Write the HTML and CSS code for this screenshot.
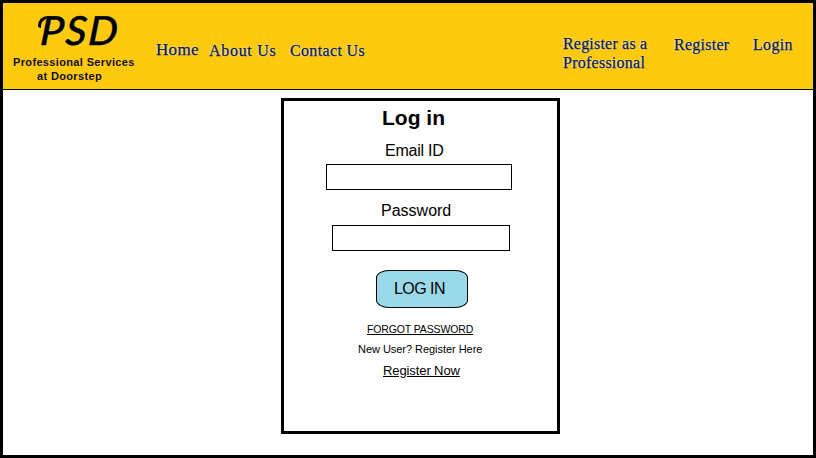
FILE: index.html
```html
<!DOCTYPE html>
<html lang="en">
<head>
<meta charset="utf-8">
<title>PSD - Log in</title>
<link rel="stylesheet" href="styles.css">
</head>
<body>
<div class="page">
  <header class="header">
    <div class="brand">
      <div class="logo"><span class="logo-text">PSD</span></div>
      <div class="tagline"><span class="tag-top">Professional Services</span><br><span class="tag-bottom">at Doorstep</span></div>
    </div>
    <nav class="nav">
      <a class="home">Home</a>
      <a class="about">About Us</a>
      <a class="contact">Contact Us</a>
    </nav>
    <nav class="account">
      <a class="pro">Register as a<br><span class="pro-line">Professional</span></a>
      <a class="register">Register</a>
      <a class="login">Login</a>
    </nav>
  </header>
  <main class="main">
    <form class="card">
      <h1 class="title">Log in</h1>
      <label class="label email-label" for="email">Email ID</label>
      <input class="field email" id="email" type="email">
      <label class="label password-label" for="password">Password</label>
      <input class="field password" id="password" type="password">
      <button class="submit" type="button"><span>LOG IN</span></button>
      <a class="forgot">FORGOT PASSWORD</a>
      <p class="new-user">New User? Register Here</p>
      <a class="register-now">Register Now</a>
    </form>
  </main>
</div>
</body>
</html>
```
FILE: styles.css
```css
* { box-sizing: border-box; }
body { margin: 0; background: #fff; color: #000; font-family: "Liberation Sans", Arial, sans-serif; }
.page { width: 816px; height: 458px; border: 3px solid #000; overflow: hidden; }
.header { display: flex; align-items: flex-start; height: 87px; background: #ffc90e; border-bottom: 1px solid #000; white-space: nowrap; }
.brand { width: 153px; padding: 5px 0 0 10px; }
.logo { position: relative; height: 47px; padding-left: 26px; font: italic 500 40px/44px Lato, sans-serif; text-shadow: 0 0 1px #dce6f0; }
.logo-text { display: inline-block; transform: scaleX(1.04) skewX(-4deg); transform-origin: left bottom; letter-spacing: 1.5px; -webkit-text-stroke: 0.4px #000; }
/* entry stroke that hooks round the left of the P */
.logo::before { content: ""; position: absolute; left: 25px; top: 8px; width: 14px; height: 9px; border: solid #000; border-width: 3px 0 0 3px; border-radius: 12px 0 0 3px; }
.tagline { font-weight: bold; font-size: 11px; line-height: 14px; color: #101020; }
.tag-top { letter-spacing: 0.35px; }
.tag-bottom { margin-left: 24px; letter-spacing: 0.35px; }
.nav, .account { display: flex; font: 16px/19px "Liberation Serif", "Times New Roman", serif; color: #10183a; -webkit-text-stroke: 0.25px #10183a; text-shadow: 0 0 1px #eef4ff, -1px 0 1px #dce6f0; }
.nav { width: 407px; padding-top: 37px; }
.home { width: 53px; font-size: 17px; letter-spacing: 0.3px; }
.about, .contact { padding-top: 1px; }
.about { width: 81px; letter-spacing: 0.7px; }
.contact { letter-spacing: 0.35px; }
.account { padding-top: 31px; }
.pro { width: 111px; letter-spacing: 0.2px; }
.pro-line { letter-spacing: 0.25px; }
.register, .login { padding-top: 1px; }
.register { width: 79px; letter-spacing: 0.25px; }
.login { letter-spacing: 0.35px; }
.main { display: flex; padding: 8px 0 0 278px; }
.card { display: flex; flex-direction: column; align-items: flex-start; width: 279px; height: 336px; border: 3px solid #000; }
.title { margin: 5px 0 0 98px; font-size: 21px; line-height: 24px; }
.label { font-size: 16px; line-height: 18px; }
.email-label { margin: 12px 0 0 101px; letter-spacing: -0.25px; }
.password-label { margin: 12px 0 0 97px; }
.field { height: 26px; padding: 2px 6px; border: 1px solid #000; border-radius: 0; background: #fff; font: inherit; outline: 0; }
.email { width: 186px; margin: 4px 0 0 42px; }
.password { width: 178px; margin: 5px 0 0 48px; }
.submit { width: 92px; height: 38px; margin: 19px 0 0 92px; padding: 0 0 0 17px; border: 1px solid #000; border-radius: 13px / 8px; background: #99d9ea; color: #000; font: 16px/18px "Liberation Sans", Arial, sans-serif; letter-spacing: -0.55px; text-align: left; }
.forgot { margin: 15px 0 0 83px; font-size: 10.5px; line-height: 13px; letter-spacing: -0.13px; text-decoration: underline; }
.new-user { margin: 7px 0 0 74px; font-size: 11px; line-height: 13px; letter-spacing: -0.04px; }
.register-now { margin: 7px 0 0 99px; font-size: 13px; line-height: 15px; letter-spacing: -0.1px; text-decoration: underline; }
```
